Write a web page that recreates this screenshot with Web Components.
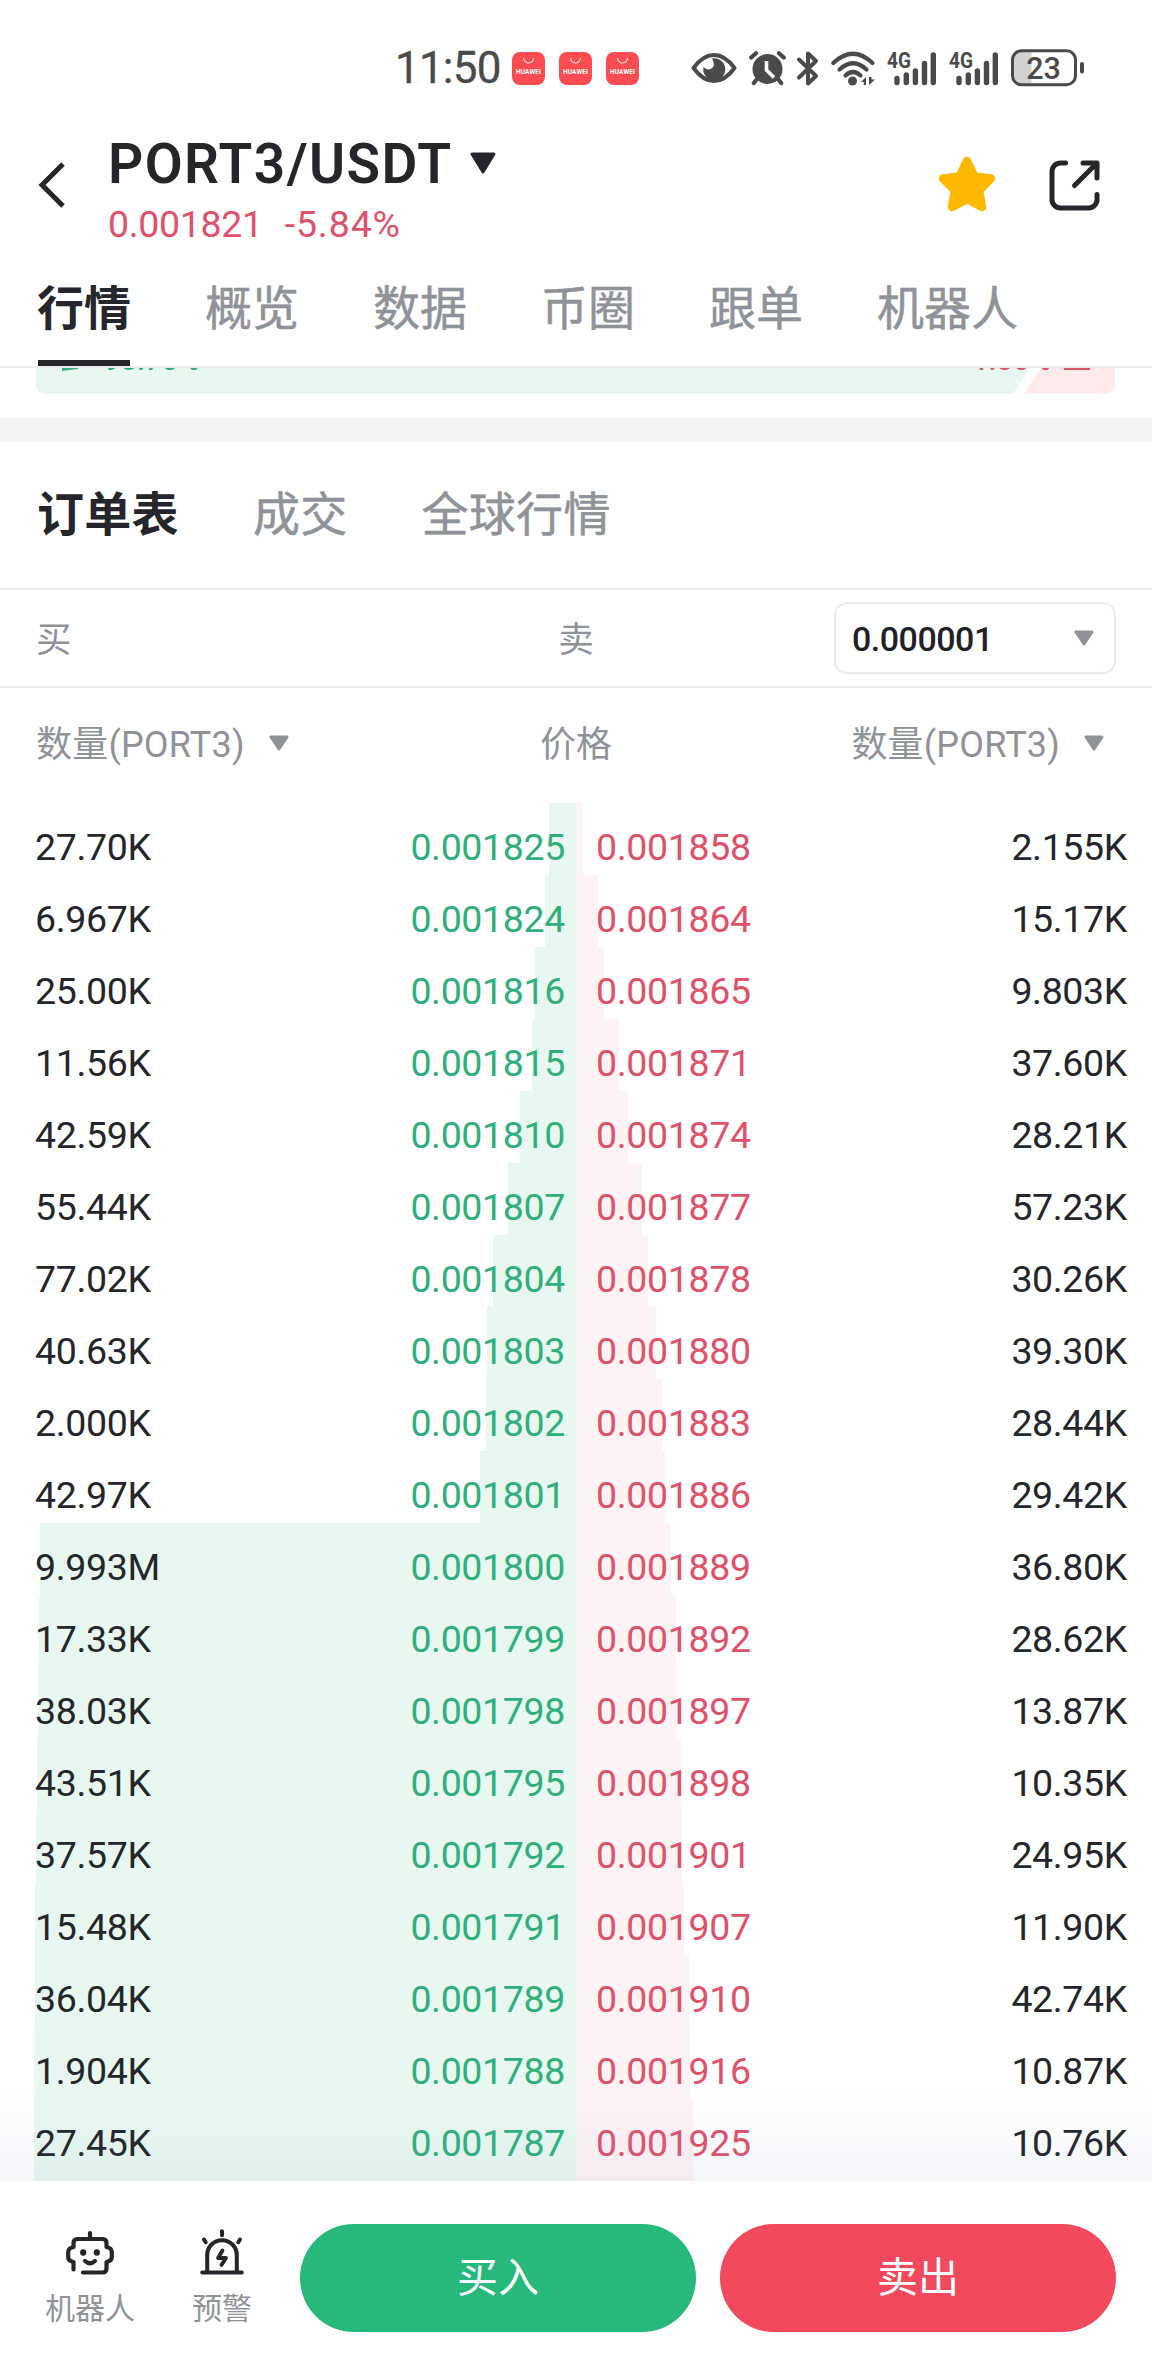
<!DOCTYPE html>
<html lang="zh-CN">
<head>
<meta charset="utf-8">
<title>PORT3/USDT</title>
<style>
html,body{margin:0;padding:0;background:#fff}
body{width:1152px;height:2376px;overflow:hidden;font-family:Roboto,"Noto Sans CJK SC",sans-serif;color:#24262c}
</style>
</head>
<body>
<market-page></market-page>
<script>
const define = (name, render) => customElements.define(name, class extends HTMLElement {
  connectedCallback() {
    if (this.shadowRoot) return;
    this.attachShadow({ mode: 'open' }).innerHTML = render(this);
  }
});

/* Icons: each entry is [width, height, markup]. */
const ICONS = {
  eye: [46, 32, '<path d="M2.500 16C9 7 16 3 23 3s14 4 20.500 13C37 25 30 29 23 29S9 25 2.500 16Z" fill="none" stroke="#4a4a4a" stroke-width="4" stroke-linejoin="round"/><path d="M21 6.500A11 11 0 1 1 12.500 15Q16 19 20.500 16.500T21 6.500Z" fill="#4a4a4a"/>'],
  alarm: [37, 34, '<g stroke="#4a4a4a" stroke-width="4.200" stroke-linecap="round"><path d="M2.200 6.500 7 2.200M34.800 6.500 30 2.200M8 28 4.800 32M29 28l3.200 4"/></g><circle cx="18.500" cy="18" r="15" fill="#4a4a4a"/><path d="M17.500 10v9l7.500 7.500" fill="none" stroke="#fff" stroke-width="3.600"/>'],
  bluetooth: [22, 35, '<path d="M2 8.500 19 25l-8 7.500V2.500L19 10 2 26.500" fill="none" stroke="#4a4a4a" stroke-width="4" stroke-linejoin="round" stroke-linecap="round"/>'],
  wifi: [44, 35, '<g fill="none" stroke="#4a4a4a" stroke-width="4.200" stroke-linecap="round"><path d="M2.300 12Q22 -6.500 41.500 12M8.500 18.500Q22 6 35.500 18.500M14.500 24.500Q22 17.500 29.500 24.500"/></g><circle cx="21.500" cy="30" r="4.500" fill="#4a4a4a"/><path d="M35 26v8h-2.200v-3H30ZM38 26v8l6-5.500h-3.500V26Z" fill="#4a4a4a"/>'],
  signal: [49, 35, '<text x="0" y="16.500" font-size="22" font-family="Roboto" font-weight="700" textLength="24" lengthAdjust="spacingAndGlyphs" fill="#4a4a4a">4G</text><g stroke="#4a4a4a" stroke-width="5.400" stroke-linecap="round"><path d="M10 27.500v4M19.300 24v7.500M28.400 20v11.500M37.500 12.500v19M46.300 4v27.500"/></g>'],
  battery: [74, 38, '<path d="M9 2.500h11.500v33H9a7 7 0 0 1-7-7v-19a7 7 0 0 1 7-7Z" fill="#d2d2d2"/><rect x="1.500" y="1.700" width="63" height="34" rx="9" fill="none" stroke="#4a4a4a" stroke-width="3"/><rect x="69" y="13" width="4" height="11.500" rx="2" fill="#4a4a4a"/><text x="32.500" y="29.500" text-anchor="middle" font-size="30.500" font-family="Roboto" font-weight="500" fill="#4a4a4a">23</text>'],
  app: [33, 33, '<rect width="33" height="33" rx="8" fill="#fb4c52"/><path d="M11.500 6a5 5 0 0 0 10 0" fill="none" stroke="#ffd5cf" stroke-width="1.200"/><text x="16.500" y="21.500" text-anchor="middle" font-size="6.500" font-family="Roboto" font-weight="700" textLength="25" fill="#fff">HUAWEI</text>'],
  back: [28, 46, '<path d="M25 2 4 23l21 21" fill="none" stroke="#24262c" stroke-width="5"/>'],
  star: [58, 56, '<path d="M29 5 36.500 20.500 53 22.500 41 34.500 44 51 29 43 14 51 17 34.500 5 22.500 21.500 20.500Z" fill="#ffb800" stroke="#ffb800" stroke-width="8.500" stroke-linejoin="round"/>'],
  share: [51, 51, '<g fill="none" stroke="#24262c" stroke-width="5" stroke-linecap="round" stroke-linejoin="round"><path d="M16.500 3h-5a8.500 8.500 0 0 0-8.500 8.500v28a8.500 8.500 0 0 0 8.500 8.500h28a8.500 8.500 0 0 0 8.500-8.500V34.500M34 3h14v15M47 4 25.500 25.500"/></g>'],
  robot: [48, 44, '<g fill="none" stroke="#24262c" stroke-width="4.200" stroke-linecap="round" stroke-linejoin="round"><path d="M24 2v6M7.500 38.500V31Q2.200 30 2.200 26v-5q0-4 5.300-5V12q0-4 4-4h25q4 0 4 4v4q5.300 1 5.300 5v5q0 4-5.300 5v6.500q0 4-4 4H17"/><path d="M19 30q5 4.500 10 0"/></g><ellipse cx="17.200" cy="21.500" rx="3.100" ry="3.300" fill="#24262c"/><ellipse cx="30.800" cy="21.500" rx="3.100" ry="3.300" fill="#24262c"/>'],
  alert: [44, 46, '<g fill="none" stroke="#24262c" stroke-width="4" stroke-linecap="round" stroke-linejoin="round"><path d="M2.200 43.500h39.600M7.200 43V26a14.800 14.800 0 0 1 29.600 0v17M22 2.200v4M4 10.500l1.700 2.700M40 10.500l-1.700 2.700"/><path d="M22.500 21.500 18 29h8l-4.500 7" stroke-width="3.800"/></g>']
};
define('ui-icon', el => {
  const [w, h, body] = ICONS[el.getAttribute('name')];
  return `<style>:host{display:block;flex:none;width:${w}px;height:${h}px}svg{display:block;overflow:visible}</style>
  <svg width="${w}" height="${h}" viewBox="0 0 ${w} ${h}">${body}</svg>`;
});
/* Downward caret; size from attributes, colour inherited. */
define('ui-caret', el => {
  const w = +el.getAttribute('w'), h = +el.getAttribute('h');
  return `<style>:host{display:block;flex:none;width:${w}px;height:${h}px}svg{display:block}</style>
  <svg width="${w}" height="${h}" viewBox="0 0 ${w} ${h}"><path d="M2 2H${w - 2}L${w / 2} ${h - 2}Z" fill="currentColor" stroke="currentColor" stroke-width="3" stroke-linejoin="round"/></svg>`;
});

define('status-bar', () => `<style>
:host{display:flex;height:103px;padding:33px 67px 0 395px;box-sizing:border-box;align-items:center;color:#4a4a4a}
time{font-size:44px;line-height:50px;width:118px;letter-spacing:-.8px;white-space:nowrap;-webkit-text-stroke:.3px currentColor}
.apps{display:flex;gap:14px}
.sys{display:flex;align-items:center;margin-left:52px}
</style><time>11:50</time><div class="apps"><ui-icon name="app"></ui-icon><ui-icon name="app"></ui-icon><ui-icon name="app"></ui-icon></div>
<div class="sys"><ui-icon name="eye"></ui-icon><ui-icon name="alarm" style="margin-left:12px"></ui-icon><ui-icon name="bluetooth" style="margin-left:11px"></ui-icon><ui-icon name="wifi" style="margin-left:12px"></ui-icon><ui-icon name="signal" style="margin-left:12px"></ui-icon><ui-icon name="signal" style="margin-left:13px"></ui-icon><ui-icon name="battery" style="margin-left:13px"></ui-icon></div>`);

define('pair-header', () => `<style>
:host{display:flex;height:161px;box-sizing:border-box;padding:25px 52.500px 0 38px}
.back{padding-top:34px}
.pair{margin-left:42px;flex:1}
.name{display:flex;align-items:center;height:70px;font-size:55px;font-weight:600;white-space:nowrap}
.name b{font-weight:600;width:362px;letter-spacing:1.400px;padding-top:2px}
.quote{display:flex;gap:22px;font-size:37.500px;line-height:44px;margin-top:4px;color:#e0526a;white-space:nowrap;letter-spacing:-.350px}
.quote span+span{letter-spacing:.900px}
.acts{display:flex;gap:53px;padding-top:28px}
</style><ui-icon class="back" name="back"></ui-icon>
<div class="pair"><div class="name"><b>PORT3/USDT</b><ui-caret w="26" h="22"></ui-caret></div>
<div class="quote"><span>0.001821</span><span>-5.84%</span></div></div>
<div class="acts"><ui-icon name="star"></ui-icon><ui-icon name="share" style="margin-top:4px"></ui-icon></div>`);

define('tab-item', () => `<style>
:host{display:flex;align-items:center;position:relative;font-size:47px;font-weight:400;line-height:60px;color:#8f9399;white-space:nowrap;font-family:"Noto Sans CJK SC",sans-serif;-webkit-text-stroke:.5px currentColor}
:host([active]){color:#24262c;font-weight:700;-webkit-text-stroke:0}
:host([active][line]) i{position:absolute;left:1px;right:1px;bottom:0;height:6px;background:#24262c}
</style><slot></slot><i></i>`);
define('tab-row', () => `<style>
:host{display:flex;gap:74px;padding:0 37px;border-bottom:2px solid #ececee;box-sizing:border-box}
</style><slot></slot>`);

/* Buy/sell ratio strip, scrolled mostly under the tab row. */
define('ratio-strip', () => `<style>
:host{display:block;height:50px;padding:0 37px 0 36px;background:#fff}
.bar{position:relative;display:flex;height:26px;border-radius:0 0 9px 9px;overflow:hidden}
.buy{width:994px;background:#e8f8f0;clip-path:polygon(0 0,100% 0,calc(100% - 17px) 100%,0 100%)}
.sell{flex:1;margin-left:-6px;background:#feeaeb;clip-path:polygon(17px 0,100% 0,100% 100%,0 100%)}
.txt{position:absolute;left:26px;right:25px;top:-30px;height:32px;display:flex;justify-content:space-between;align-items:flex-end;font-size:29px;line-height:32px;font-weight:500}
.g,.r{display:flex;align-items:flex-end;gap:26px;color:#30a981}.r{color:#da5566;gap:13px}
.g span,.r span{height:32px;margin-bottom:-5.500px}
.g i{width:16px;height:3px;background:#3fae84;transform:skewY(-7deg)}.r i{width:26px;height:2px;background:#da5566}
</style><div class="bar"><div class="buy"></div><div class="sell"></div>
<div class="txt"><div class="g"><i></i><span>98.70%</span></div><div class="r"><span>1.30%</span><i></i></div></div></div>`);

define('side-bar', () => `<style>
:host{display:grid;grid-template-columns:1fr 1fr 1fr;align-items:center;height:98px;padding:0 36px;box-sizing:border-box;border-bottom:2px solid #ececee;font-size:35.500px;color:#8f9399}
span{text-align:center;padding-bottom:4px}span:first-of-type{text-align:left}
.sel{justify-self:end;width:282px;height:72px;box-sizing:border-box;border:2px solid #e9eaec;border-radius:13px;display:flex;align-items:center;justify-content:space-between;padding:0 20px 0 16px;color:#8f9399}
b{font-weight:500;font-size:34px;color:#1f2126;letter-spacing:-.500px;padding-top:1px}
</style><span>买</span><span>卖</span><div class="sel"><b>0.000001</b><ui-caret w="20" h="16"></ui-caret></div>`);

define('book-head', () => `<style>
:host{display:grid;grid-template-columns:1fr 1fr 1fr;align-items:center;height:115px;padding:0 48px 9px 36px;box-sizing:border-box;font-size:36px;color:#8f9399;white-space:nowrap}
div{display:flex;align-items:center;gap:24px}
div:first-of-type,div:last-of-type{letter-spacing:.200px}
div:nth-of-type(2){justify-content:center;padding-left:12px}div:nth-of-type(3){justify-content:flex-end}
ui-caret{margin-top:4px}
</style><div><span>数量(PORT3)</span><ui-caret w="20" h="16"></ui-caret></div><div><span>价格</span></div><div><span>数量(PORT3)</span><ui-caret w="20" h="16"></ui-caret></div>`);

/* One depth level; the b and s attributes are the widths of the buy and sell bars. */
define('book-row', el => `<style>
:host{display:grid;grid-template-columns:576px 576px;height:${el.getAttribute('h') || 72}px;font-size:37.500px;line-height:44px;white-space:nowrap;overflow:hidden;letter-spacing:-.350px}
div{display:flex;justify-content:space-between;padding:22px 11px 0 35px;box-sizing:border-box;background:linear-gradient(#e8f8f0,#e8f8f0) right/${el.getAttribute('b')}px 100% no-repeat}
div+div{padding:22px 25px 0 20px;background:linear-gradient(#fef3f4,#fef3f4) left/${el.getAttribute('s')}px 100% no-repeat}
.g{color:#2fb07b}.r{color:#e0526a}
</style><div><slot name="bq"></slot><slot name="bp" class="g"></slot></div><div><slot name="sp" class="r"></slot><slot name="sq"></slot></div>`);

const BOOK = [
['27.70K','0.001825','0.001858','2.155K',27,7],['6.967K','0.001824','0.001864','15.17K',31,22],
['25.00K','0.001816','0.001865','9.803K',41,28],['11.56K','0.001815','0.001871','37.60K',44,43],
['42.59K','0.001810','0.001874','28.21K',56,52],['55.44K','0.001807','0.001877','57.23K',68,66],
['77.02K','0.001804','0.001878','30.26K',83,72],['40.63K','0.001803','0.001880','39.30K',89,80],
['2.000K','0.001802','0.001883','28.44K',90,86],['42.97K','0.001801','0.001886','29.42K',96,89],
['9.993M','0.001800','0.001889','36.80K',536,95],['17.33K','0.001799','0.001892','28.62K',537,100],
['38.03K','0.001798','0.001897','13.87K',538,101],['43.51K','0.001795','0.001898','10.35K',539,105],
['37.57K','0.001792','0.001901','24.95K',540,106],['15.48K','0.001791','0.001907','11.90K',541,108],
['36.04K','0.001789','0.001910','42.74K',541,113],['1.904K','0.001788','0.001916','10.87K',542,114],
['27.45K','0.001787','0.001925','10.76K',542,117]];
define('order-book', () => `<style>
:host{display:block;position:relative;height:1378px;overflow:hidden}
.fade{position:absolute;left:0;right:0;bottom:0;height:90px;background:linear-gradient(rgba(110,125,190,0),rgba(110,125,190,.065))}
</style>${BOOK.map(r => `<book-row b="${r[4]}" s="${r[5]}"><span slot="bq">${r[0]}</span><span slot="bp">${r[1]}</span><span slot="sp">${r[2]}</span><span slot="sq">${r[3]}</span></book-row>`).join('')}
<book-row b="542" s="118" h="10"></book-row><div class="fade"></div>`);

define('nav-action', el => `<style>
:host{display:flex;flex-direction:column;align-items:center;font-size:30px;line-height:36px;color:#8f9399;white-space:nowrap}
.ic{height:46px;display:flex;align-items:flex-end;margin-bottom:16px}
</style><div class="ic"><ui-icon name="${el.getAttribute('icon')}"></ui-icon></div><slot></slot>`);
define('trade-button', () => `<style>
:host{display:flex;align-items:center;justify-content:center;width:396px;height:108px;border-radius:54px;background:var(--bg);color:#fff;font-size:41px;line-height:60px;box-sizing:border-box}
</style><slot></slot>`);
define('action-bar', () => `<style>
:host{display:flex;height:195px;background:#fff;padding:43px 36px 0 45px;box-sizing:border-box}
.n{display:flex;gap:57px;width:255px;padding-top:5px;box-sizing:border-box}
.t{display:flex;gap:24px}
</style><div class="n"><nav-action icon="robot">机器人</nav-action><nav-action icon="alert">预警</nav-action></div>
<div class="t"><trade-button style="--bg:#26b97b">买入</trade-button><trade-button style="--bg:#f3495c">卖出</trade-button></div>`);

define('market-page', () => `<style>
:host{display:flex;flex-direction:column;width:1152px;height:2376px;background:#fff;overflow:hidden}
status-bar,pair-header,tab-row,ratio-strip,.gap,side-bar,book-head,order-book,action-bar{flex:none}
.main{height:104px}
.main tab-item{height:102px;padding-bottom:21px;box-sizing:border-box}
.sub{height:148px}.sub tab-item{height:137px;letter-spacing:.300px}
.gap{height:24px;background:#f4f4f6}
</style>
<status-bar></status-bar><pair-header></pair-header>
<tab-row class="main"><tab-item active line>行情</tab-item><tab-item>概览</tab-item><tab-item>数据</tab-item><tab-item>币圈</tab-item><tab-item>跟单</tab-item><tab-item>机器人</tab-item></tab-row>
<ratio-strip></ratio-strip><div class="gap"></div>
<tab-row class="sub"><tab-item active>订单表</tab-item><tab-item>成交</tab-item><tab-item>全球行情</tab-item></tab-row>
<side-bar></side-bar><book-head></book-head><order-book></order-book><action-bar></action-bar>`);
</script>
</body>
</html>
